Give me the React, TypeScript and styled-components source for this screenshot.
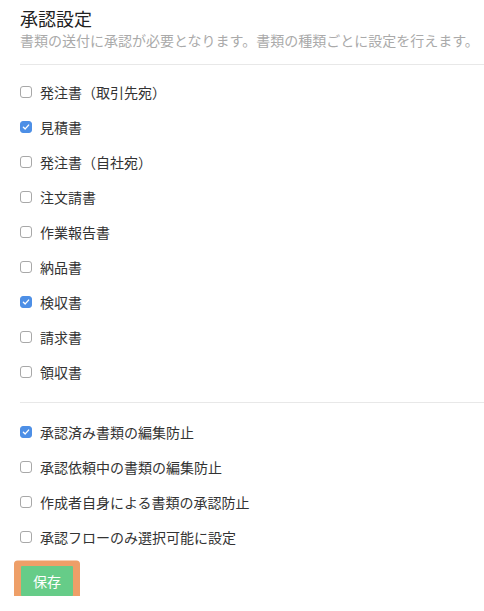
import React, { useState } from "react"
import styled, { createGlobalStyle } from "styled-components"

const GlobalStyle = createGlobalStyle`
  html, body {
    margin: 0;
    padding: 0;
    background: #fff;
  }
  body {
    font-family: "Noto Sans CJK JP", "Noto Sans", sans-serif;
    color: #333;
  }
`

const documentTypes = [
  { label: "発注書（取引先宛）", checked: false },
  { label: "見積書", checked: true },
  { label: "発注書（自社宛）", checked: false },
  { label: "注文請書", checked: false },
  { label: "作業報告書", checked: false },
  { label: "納品書", checked: false },
  { label: "検収書", checked: true },
  { label: "請求書", checked: false },
  { label: "領収書", checked: false },
]

const options = [
  { label: "承認済み書類の編集防止", checked: true },
  { label: "承認依頼中の書類の編集防止", checked: false },
  { label: "作成者自身による書類の承認防止", checked: false },
  { label: "承認フローのみ選択可能に設定", checked: false },
]

function CheckRow({ label, initial }: { label: string; initial: boolean }) {
  const [checked, setChecked] = useState(initial)
  return (
    <Row onClick={() => setChecked(!checked)}>
      <Box checked={checked}>
        {checked && (
          <svg width="8" height="8" viewBox="0 0 8 8">
            <path d="M1.4 4.2 L3.2 5.9 L6.6 2.1" fill="none" stroke="#fff" strokeWidth="1.4" strokeLinecap="round" strokeLinejoin="round" />
          </svg>
        )}
      </Box>
      <Label>{label}</Label>
    </Row>
  )
}

export default function App() {
  return (
    <>
      <GlobalStyle />
      <Page>
        <Header>
          <Title>承認設定</Title>
          <Description>書類の送付に承認が必要となります。書類の種類ごとに設定を行えます。</Description>
        </Header>
        <List divided>
          {documentTypes.map(d => <CheckRow key={d.label} label={d.label} initial={d.checked} />)}
        </List>
        <List>
          {options.map(o => <CheckRow key={o.label} label={o.label} initial={o.checked} />)}
        </List>
        <Footer>
          <SaveButton>保存</SaveButton>
        </Footer>
      </Page>
    </>
  )
}

const Page = styled.div`
  padding: 6px 0 0 20px;
`

const Header = styled.div`
  padding-bottom: 14px;
  border-bottom: 1px solid #e8e8e8;
`

const Title = styled.h1`
  margin: 0;
  font-size: 18px;
  line-height: 24px;
  font-weight: 400;
  color: #222;
`

const Description = styled.p`
  margin: 0;
  font-size: 14px;
  line-height: 20px;
  color: #aaa;
  white-space: nowrap;
`

const List = styled.div<{ divided?: boolean }>`
  display: flex;
  flex-direction: column;
  padding: ${p => (p.divided ? "9px 0 13px" : "11px 0 12px")};
  border-bottom: ${p => (p.divided ? "1px solid #e8e8e8" : "none")};
`

const Row = styled.label`
  display: flex;
  align-items: center;
  gap: 8px;
  height: 35px;
  cursor: pointer;
`

const Box = styled.span<{ checked: boolean }>`
  display: flex;
  align-items: center;
  justify-content: center;
  box-sizing: border-box;
  width: 12px;
  height: 12px;
  border-radius: 3px;
  background: ${p => (p.checked ? "#4d8fe6" : "#fff")};
  border: 1px solid ${p => (p.checked ? "#4d8fe6" : "#a8a8a8")};
`

const Label = styled.span`
  font-size: 14px;
  line-height: 20px;
  color: #333;
`

const Footer = styled.div`
  padding: 0 0 0 1px;
`

const SaveButton = styled.button`
  display: block;
  width: 52px;
  height: 30px;
  padding: 0;
  border: none;
  border-radius: 1px;
  background: #66cc88;
  color: #fff;
  font-family: "Noto Sans CJK JP", sans-serif;
  font-size: 14px;
  box-shadow: 0 1.5px 0 7px #ee9f68;
  cursor: pointer;
`
